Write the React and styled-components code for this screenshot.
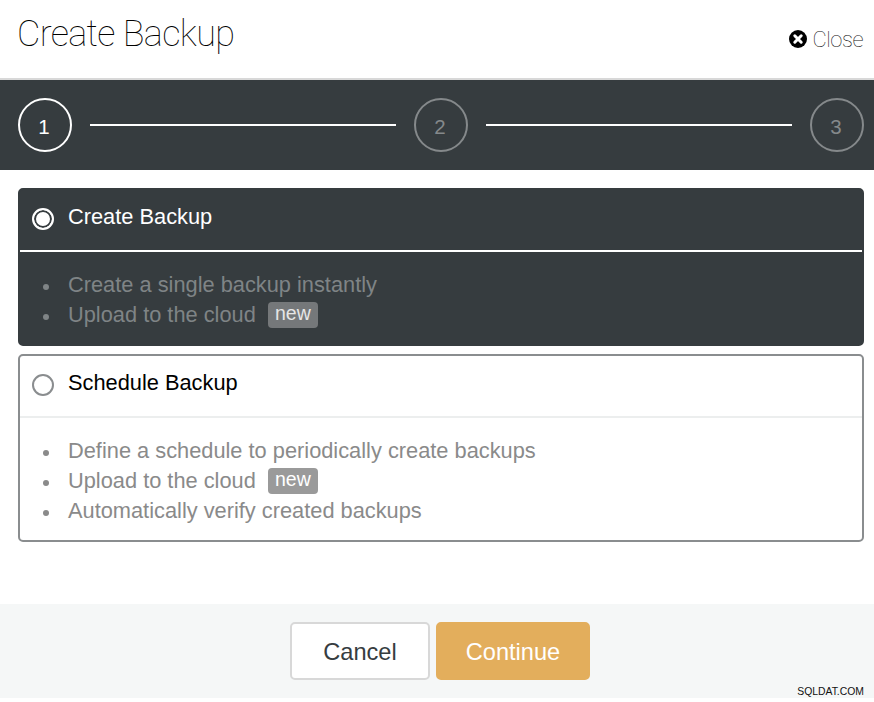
import React from "react";
import styled, { createGlobalStyle } from "styled-components";

const Global = createGlobalStyle`
  html, body { margin: 0; padding: 0; background: #fff; }
  body { font-family: "Liberation Sans", Arial, sans-serif; width: 874px; height: 702px; overflow: hidden; }
  * { box-sizing: border-box; }
`;

const Page = styled.div`
  position: relative;
  width: 874px;
  height: 702px;
  display: flex;
  flex-direction: column;
`;

const Header = styled.header`
  height: 80px;
  border-bottom: 2px solid #d8d8d8;
  display: flex;
  justify-content: space-between;
  padding: 0 11px 0 17px;
`;

const Title = styled.h1`
  margin: 13px 0 0;
  font-family: Roboto, "Liberation Sans", sans-serif;
  font-size: 36px;
  line-height: 42px;
  font-weight: 100;
  letter-spacing: -0.65px;
  color: #000;
`;

const CloseLink = styled.div`
  display: flex;
  align-items: center;
  gap: 6px;
  margin-top: 27px;
  height: 24px;
  font-family: Roboto, "Liberation Sans", sans-serif;
  font-size: 22px;
  font-weight: 100;
  letter-spacing: -0.5px;
  color: #111;
`;

const Stepper = styled.div`
  height: 90px;
  background: #363c3f;
  display: flex;
  align-items: center;
  padding: 0 10px 0 18px;
`;

const Step = styled.div`
  width: 54px;
  height: 54px;
  flex: none;
  border-radius: 50%;
  border: 2px solid ${(p) => (p.$active ? "#fff" : "#85898b")};
  color: ${(p) => (p.$active ? "#fff" : "#85898b")};
  display: flex;
  align-items: center;
  justify-content: center;
  font-size: 20.5px;
  padding: 3px 2px 0 0;
`;

const StepLine = styled.div`
  flex: 1;
  height: 2px;
  background: #fff;
  margin: 0 18px;
`;

const Cards = styled.div`
  padding: 18px 10px 0 18px;
  display: flex;
  flex-direction: column;
  gap: 8px;
  flex: 1;
`;

const Card = styled.section`
  border-radius: 5px;
  border: 2px solid ${(p) => (p.$selected ? "#363c3f" : "#8a8d8f")};
  background: ${(p) => (p.$selected ? "#363c3f" : "#fff")};
`;

const CardHead = styled.div`
  height: 62px;
  border-bottom: 2px solid ${(p) => (p.$selected ? "#fff" : "#eceeee")};
  display: flex;
  align-items: flex-start;
  padding: 0 0 0 12px;
  color: ${(p) => (p.$selected ? "#fff" : "#000")};
  font-size: 21.8px;
`;

const Radio = styled.span`
  width: 22px;
  height: 22px;
  flex: none;
  margin-top: 18px;
  border-radius: 50%;
  border: 2px solid ${(p) => (p.$selected ? "#fff" : "#8a8d8f")};
  background: ${(p) => (p.$selected ? "#fff" : "transparent")};
  box-shadow: ${(p) => (p.$selected ? "inset 0 0 0 2px #363c3f" : "none")};
`;

const CardTitle = styled.span`
  margin: 15px 0 0 14px;
  line-height: 24px;
`;

const List = styled.ul`
  margin: 0;
  padding: 18px 0 14px 48px;
  list-style: none;
`;

const Item = styled.li`
  position: relative;
  height: 30px;
  line-height: 30px;
  font-size: 21.8px;
  color: ${(p) => (p.$selected ? "#7f8486" : "#8a8a8a")};
  display: flex;
  align-items: center;
  white-space: pre;
  &::before {
    content: "";
    position: absolute;
    left: -25px;
    top: 14px;
    width: 6px;
    height: 6px;
    border-radius: 50%;
    background: currentColor;
  }
`;

const Badge = styled.span`
  margin-left: 6px;
  height: 26px;
  width: 50px;
  border-radius: 4px;
  font-size: 19.5px;
  line-height: 23px;
  text-align: center;
  color: ${(p) => (p.$selected ? "#e6e6e6" : "#fff")};
  background: ${(p) => (p.$selected ? "#75787a" : "#9a9a9a")};
`;

const Footer = styled.footer`
  height: 94px;
  margin-bottom: 4px;
  background: #f5f7f7;
  display: flex;
  justify-content: center;
  gap: 6px;
  padding: 18px 0 0 6px;
`;

const Button = styled.button`
  height: 58px;
  width: ${(p) => (p.$primary ? "154px" : "140px")};
  border-radius: 5px;
  border: 2px solid ${(p) => (p.$primary ? "#e3ae5c" : "#d8d8d8")};
  background: ${(p) => (p.$primary ? "#e3ae5c" : "#fff")};
  color: ${(p) => (p.$primary ? "#fff" : "#363c3f")};
  font-family: "Liberation Sans", Arial, sans-serif;
  font-size: 23.6px;
  padding: 2px 0 0;
`;

const Watermark = styled.div`
  position: absolute;
  right: 10px;
  bottom: 4px;
  font-family: "Liberation Sans", Arial, sans-serif;
  font-size: 10.4px;
  line-height: 12px;
  color: #111;
`;

const CloseIcon = () => (
  <svg width="18" height="18" viewBox="0 0 18 18" aria-hidden="true">
    <circle cx="9" cy="9" r="9" fill="#000" />
    <path d="M5.8 5.8l6.4 6.4M12.2 5.8l-6.4 6.4" stroke="#fff" strokeWidth="3" strokeLinecap="round" />
  </svg>
);

const NewBadge = ({ selected }) => <Badge $selected={selected}>new</Badge>;

const Option = ({ selected, title, children }) => (
  <Card $selected={selected}>
    <CardHead $selected={selected}>
      <Radio $selected={selected} />
      <CardTitle>{title}</CardTitle>
    </CardHead>
    <List>{children}</List>
  </Card>
);

export default function App() {
  return (
    <Page>
      <Global />
      <Header>
        <Title>Create Backup</Title>
        <CloseLink>
          <CloseIcon />
          Close
        </CloseLink>
      </Header>
      <Stepper>
        <Step $active>1</Step>
        <StepLine />
        <Step>2</Step>
        <StepLine />
        <Step>3</Step>
      </Stepper>
      <Cards>
        <Option selected title="Create Backup">
          <Item $selected>Create a single backup instantly</Item>
          <Item $selected>
            Upload to the cloud <NewBadge selected />
          </Item>
        </Option>
        <Option title="Schedule Backup">
          <Item>Define a schedule to periodically create backups</Item>
          <Item>
            Upload to the cloud <NewBadge />
          </Item>
          <Item>Automatically verify created backups</Item>
        </Option>
      </Cards>
      <Footer>
        <Button>Cancel</Button>
        <Button $primary>Continue</Button>
      </Footer>
      <Watermark>SQLDAT.COM</Watermark>
    </Page>
  );
}
